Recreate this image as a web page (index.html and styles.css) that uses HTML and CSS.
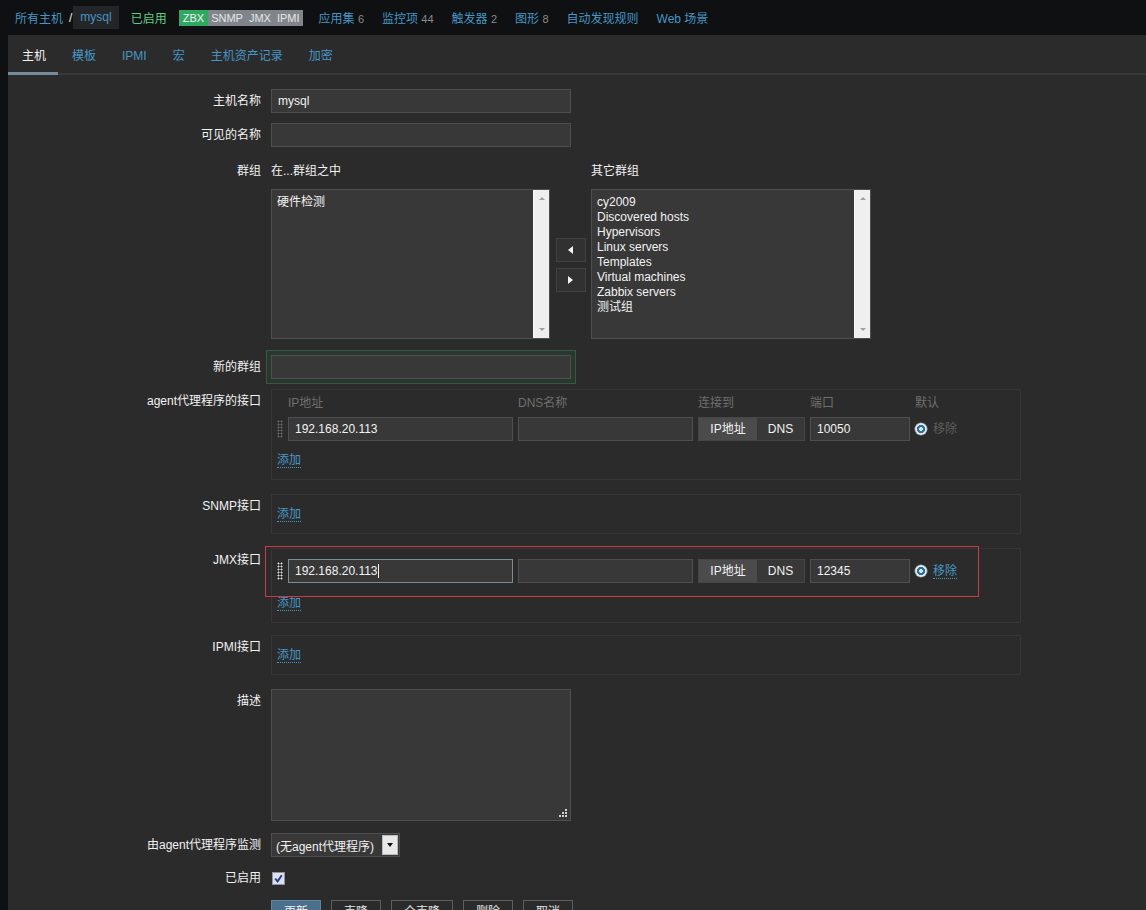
FILE: index.html
```html
<!DOCTYPE html>
<html lang="zh-CN">
<head>
<meta charset="utf-8">
<title>主机 - mysql</title>
<link rel="stylesheet" href="styles.css">
</head>
<body>
<header class="topnav">
  <a class="crumb" href="#">所有主机</a>
  <span class="sep">/</span>
  <a class="crumb-current" href="#">mysql</a>
  <span class="status-on">已启用</span>
  <span class="badges"><span class="badge green">ZBX</span><span class="badge grey">SNMP</span><span class="badge grey">JMX</span><span class="badge grey">IPMI</span></span>
  <a class="navlink first" href="#">应用集 <span class="cnt">6</span></a>
  <a class="navlink" href="#">监控项 <span class="cnt">44</span></a>
  <a class="navlink" href="#">触发器 <span class="cnt">2</span></a>
  <a class="navlink" href="#">图形 <span class="cnt">8</span></a>
  <a class="navlink" href="#">自动发现规则</a>
  <a class="navlink" href="#">Web 场景</a>
</header>

<main class="panel">
  <nav class="tabs">
    <a class="tab active" href="#">主机</a>
    <a class="tab" href="#">模板</a>
    <a class="tab" href="#">IPMI</a>
    <a class="tab" href="#">宏</a>
    <a class="tab" href="#">主机资产记录</a>
    <a class="tab" href="#">加密</a>
  </nav>

  <form class="form">
    <div class="row">
      <div class="lbl">主机名称</div>
      <div class="inp w300">mysql</div>
    </div>
    <div class="row">
      <div class="lbl">可见的名称</div>
      <div class="inp w300"></div>
    </div>

    <div class="row row-groups">
      <div class="lbl lbl-groups">群组</div>
      <div class="groups">
        <div class="g-head">在...群组之中</div>
        <div></div>
        <div class="g-head">其它群组</div>
        <div class="list">
          <div class="list-items">
            <div>硬件检测</div>
          </div>
          <div class="scroll"><span class="arr up"></span><span class="arr down"></span></div>
        </div>
        <div class="moves">
          <button type="button" class="mv"><span class="tri left"></span></button>
          <button type="button" class="mv"><span class="tri right"></span></button>
        </div>
        <div class="list">
          <div class="list-items">
            <div>cy2009</div>
            <div>Discovered hosts</div>
            <div>Hypervisors</div>
            <div>Linux servers</div>
            <div>Templates</div>
            <div>Virtual machines</div>
            <div>Zabbix servers</div>
            <div>测试组</div>
          </div>
          <div class="scroll"><span class="arr up"></span><span class="arr down"></span></div>
        </div>
      </div>
    </div>

    <div class="row">
      <div class="lbl">新的群组</div>
      <div class="inp w300 glow"></div>
    </div>

    <div class="row row-if">
      <div class="lbl">agent代理程序的接口</div>
      <div class="ifbox agent">
        <div class="ifgrid">
          <span></span>
          <span class="th">IP地址</span>
          <span class="th">DNS名称</span>
          <span class="th">连接到</span>
          <span class="th">端口</span>
          <span class="th">默认</span>

          <span class="handle"></span>
          <div class="inp">192.168.20.113</div>
          <div class="inp"></div>
          <div class="seg"><span class="on">IP地址</span><span>DNS</span></div>
          <div class="inp">10050</div>
          <div class="def"><span class="radio"></span><span class="rm disabled">移除</span></div>
        </div>
        <div class="addline"><a class="add" href="#">添加</a></div>
      </div>
    </div>

    <div class="row row-if">
      <div class="lbl">SNMP接口</div>
      <div class="ifbox empty">
        <div class="addline"><a class="add" href="#">添加</a></div>
      </div>
    </div>

    <div class="row row-if row-jmx">
      <div class="lbl">JMX接口</div>
      <div class="ifbox jmx">
        <div class="ifgrid">
          <span class="handle hot"></span>
          <div class="inp focus">192.168.20.113<span class="caret"></span></div>
          <div class="inp"></div>
          <div class="seg"><span class="on">IP地址</span><span>DNS</span></div>
          <div class="inp">12345</div>
          <div class="def"><span class="radio"></span><a class="rm add" href="#">移除</a></div>
        </div>
        <div class="addline"><a class="add" href="#">添加</a></div>
        <div class="mark"></div>
      </div>
    </div>

    <div class="row row-if">
      <div class="lbl">IPMI接口</div>
      <div class="ifbox empty">
        <div class="addline"><a class="add" href="#">添加</a></div>
      </div>
    </div>

    <div class="row row-desc">
      <div class="lbl">描述</div>
      <div class="textarea">
        <svg class="grip" width="8" height="8" viewBox="0 0 8 8"><rect x="6" y="0" width="2" height="2" fill="#d0d0d0"/><rect x="3" y="3" width="2" height="2" fill="#d0d0d0"/><rect x="6" y="3" width="2" height="2" fill="#d0d0d0"/><rect x="0" y="6" width="2" height="2" fill="#d0d0d0"/><rect x="3" y="6" width="2" height="2" fill="#d0d0d0"/><rect x="6" y="6" width="2" height="2" fill="#d0d0d0"/></svg>
      </div>
    </div>

    <div class="row row-proxy">
      <div class="lbl">由agent代理程序监测</div>
      <div class="select"><span class="sel-text">(无agent代理程序)</span><span class="sel-btn"><span class="sel-tri"></span></span></div>
    </div>

    <div class="row row-check">
      <div class="lbl lbl-check">已启用</div>
      <div class="check">
        <svg width="13" height="13" viewBox="0 0 13 13"><rect x="0.5" y="0.5" width="12" height="12" fill="#dde1ec" stroke="#8b93a6"/><path d="M3.2 6.6 L5.6 9.4 L9.8 3.2" stroke="#243f94" stroke-width="2" fill="none"/></svg>
      </div>
    </div>

    <div class="row row-buttons">
      <div></div>
      <div class="buttons">
        <button type="button" class="btn primary">更新</button>
        <button type="button" class="btn">克隆</button>
        <button type="button" class="btn">全克隆</button>
        <button type="button" class="btn">删除</button>
        <button type="button" class="btn">取消</button>
      </div>
    </div>
  </form>
</main>
</body>
</html>
```

FILE: styles.css
```css
* { box-sizing: border-box; }
html, body { margin: 0; padding: 0; }
body {
  background: #0e1012;
  font-family: "Liberation Sans", Arial, "Noto Sans CJK SC", sans-serif;
  font-size: 12px;
  color: #f2f2f2;
  overflow: hidden;
}
a { color: #4796c4; text-decoration: none; }

/* top navigation */
.topnav {
  height: 35px;
  display: flex;
  align-items: center;
  padding-left: 15px;
  background: #0e1012;
  white-space: nowrap;
}
.sep { margin: 0 1px 0 6px; color: #f2f2f2; }
.crumb-current {
  display: inline-block;
  height: 23px;
  line-height: 23px;
  padding: 0 7px;
  background: #232528;
  color: #4796c4;
}
.status-on { margin-left: 12px; color: #5fcf82; }
.badges { display: flex; margin-left: 12px; }
.badge {
  height: 16px;
  line-height: 16px;
  padding: 0 3px;
  font-size: 11px;
}
.badge.green { background: #31a862; color: #f2f2f2; padding: 0 4px; }
.badge.grey { background: #7f858a; color: #e6e6e6; }
.navlink { margin-left: 18px; }
.navlink.first { margin-left: 16px; }
.cnt { color: #8a8a8a; font-size: 11px; }

/* panel & tabs */
.panel {
  margin-left: 8px;
  background: #2b2b2b;
  min-height: 900px;
}
.tabs {
  display: flex;
  align-items: flex-start;
  height: 40px;
  border-bottom: 2px solid #383838;
}
.tab {
  height: 40px;
  padding: 14px 12px 0 14px;
  line-height: 14px;
  border-bottom: 3px solid transparent;
  margin-bottom: -2px;
  color: #4796c4;
}
.tab.active { color: #f2f2f2; border-bottom-color: #768d99; }

/* form */
.form { padding-top: 14px; }
.row {
  display: grid;
  grid-template-columns: 253px auto;
  column-gap: 10px;
  margin-bottom: 10px;
  align-items: start;
}
.lbl {
  text-align: right;
  padding-top: 4px;
  line-height: 16px;
  white-space: nowrap;
}

.inp {
  height: 24px;
  line-height: 22px;
  background: #383838;
  border: 1px solid #4f4f4f;
  padding: 0 6px;
  color: #f2f2f2;
  white-space: nowrap;
  overflow: hidden;
}
.w300 { width: 300px; }
.glow { box-shadow: 0 0 0 4px #29382e, 0 0 0 5px #3a5644; }

/* groups */
.row-groups { margin-bottom: 16px; }
.lbl-groups { padding-top: 6px; }
.groups {
  display: grid;
  grid-template-columns: 279px 41px 280px;
  row-gap: 10px;
}
.g-head { padding-top: 6px; line-height: 16px; }
.list {
  height: 150px;
  display: flex;
  background: #383838;
  border: 1px solid #4f4f4f;
}
.list-items {
  flex: 1;
  padding: 5px 5px;
  line-height: 15px;
}
.scroll {
  width: 16px;
  background: #efefef;
  border-left: 1px solid #f7f7f7;
  display: flex;
  flex-direction: column;
  justify-content: space-between;
  align-items: center;
  padding: 7px 0;
}
.arr { width: 0; height: 0; border-left: 3px solid transparent; border-right: 3px solid transparent; }
.arr.up { border-bottom: 3px solid #a0a0a0; }
.arr.down { border-top: 3px solid #a0a0a0; }
.moves {
  display: flex;
  flex-direction: column;
  align-items: center;
  justify-content: center;
  gap: 6px;
  padding-top: 1px;
}
.mv {
  width: 30px;
  height: 24px;
  padding: 0;
  background: #313131;
  border: 1px solid #414141;
  display: flex;
  align-items: center;
  justify-content: center;
}
.tri { width: 0; height: 0; border-top: 4px solid transparent; border-bottom: 4px solid transparent; }
.tri.left { border-right: 5px solid #f2f2f2; }
.tri.right { border-left: 5px solid #f2f2f2; }

/* interfaces */
.row-if { margin-bottom: 14px; }
.row-jmx { margin-bottom: 12px; }
.ifbox {
  width: 750px;
  border: 1px solid #363636;
  padding: 0 5px 11px;
  position: relative;
}
.ifbox.agent { padding-top: 6px; }
.ifbox.empty { padding-top: 12px; }
.ifbox.jmx { padding-top: 10px; }
.ifgrid {
  display: grid;
  grid-template-columns: 6px 225px 175px 107px 100px auto;
  column-gap: 5px;
  row-gap: 7px;
  align-items: center;
}
.th { line-height: 14px; color: #6f6f6f; white-space: nowrap; }
.handle {
  width: 6px;
  height: 18px;
  background-image: radial-gradient(circle, #6b6b6b 0.9px, transparent 1.1px);
  background-size: 3px 3px;
}
.handle.hot { background-image: radial-gradient(circle, #e0e0e0 0.9px, transparent 1.1px); }
.seg {
  height: 24px;
  display: flex;
  border: 1px solid #464646;
  line-height: 22px;
}
.seg span { flex: 1; text-align: center; background: #383838; }
.seg span.on { flex: 0 0 58px; background: #4b4b4b; }
.def { display: flex; align-items: center; white-space: nowrap; }
.radio {
  width: 12px;
  height: 12px;
  border-radius: 50%;
  background: radial-gradient(circle, #cfe7f7 0 1.6px, #2e6f9e 2.2px 3.8px, #e4e9ec 4.4px);
  box-shadow: 0 0 0 0.5px #9aa3a8;
  margin-right: 6px;
}
.rm.disabled { color: #5f5f5f; line-height: 14px; }
.addline { line-height: 14px; margin-top: 12px; }
.ifbox.empty .addline { margin-top: 0; }
.ifbox.jmx .addline { margin-top: 13px; }
.add {
  display: inline-block;
  line-height: 14px;
  border-bottom: 1px dotted #4796c4;
}
.inp.focus { border-color: #7a8c96; }
.caret {
  display: inline-block;
  width: 1px;
  height: 14px;
  background: #f2f2f2;
  vertical-align: -3px;
}
.mark {
  position: absolute;
  left: -7px;
  top: -3px;
  width: 714px;
  height: 51px;
  border: 1px solid #cc3a45;
  pointer-events: none;
}

/* description */
.row-desc { margin-bottom: 12px; }
.textarea {
  width: 300px;
  height: 132px;
  background: #383838;
  border: 1px solid #4f4f4f;
  position: relative;
}
.grip { position: absolute; right: 3px; bottom: 3px; }

/* proxy select */
.select {
  width: 129px;
  height: 24px;
  display: flex;
  align-items: center;
  background: #383838;
  border: 1px solid #4f4f4f;
  padding-left: 4px;
}
.sel-text { flex: 1; white-space: nowrap; }
.sel-btn {
  width: 16px;
  height: 20px;
  margin-right: 1px;
  background: #e8e8e8;
  border: 1px solid #bdbdbd;
  display: flex;
  align-items: center;
  justify-content: center;
}
.sel-tri { width: 0; height: 0; border-left: 3px solid transparent; border-right: 3px solid transparent; border-top: 4px solid #111; }

/* enabled checkbox */
.row-check { margin-bottom: 11px; }
.lbl-check { padding-top: 3px; }
.check { padding-top: 5px; padding-left: 1px; height: 22px; }
.check svg { display: block; }

/* buttons */
.buttons { display: flex; gap: 10px; }
.btn {
  height: 24px;
  padding: 0 12px;
  border: 1px solid #5f5f5f;
  background: transparent;
  color: #e6e6e6;
  font: inherit;
  font-size: 12px;
  line-height: 22px;
}
.btn.primary { background: #4c6f8c; border-color: #5b86a6; color: #f2f2f2; }
```
